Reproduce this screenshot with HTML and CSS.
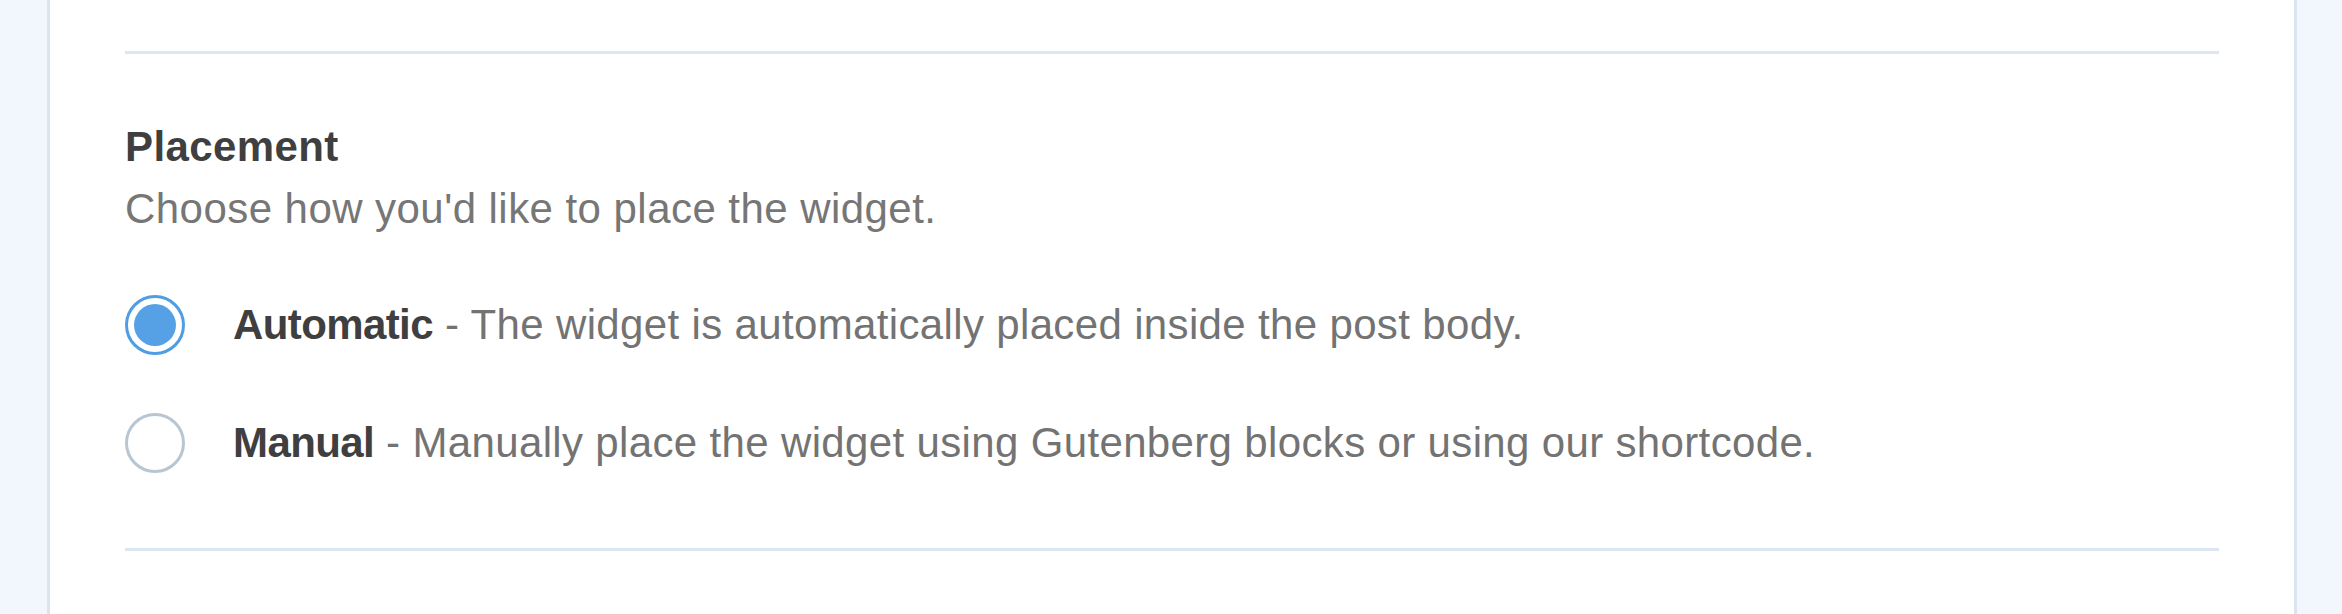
FILE: index.html
```html
<!DOCTYPE html>
<html lang="en">
<head>
<meta charset="utf-8">
<title>Placement</title>
<link rel="stylesheet" href="styles.css">
</head>
<body>
<div class="card">
  <div class="divider"></div>
  <section class="section">
    <h2 class="title">Placement</h2>
    <p class="desc">Choose how you'd like to place the widget.</p>
    <div class="options">
      <label class="option">
        <span class="radio checked"><span class="dot"></span></span>
        <span class="label"><strong>Automatic</strong> - The widget is automatically placed inside the post body.</span>
      </label>
      <label class="option">
        <span class="radio"></span>
        <span class="label"><strong>Manual</strong> - Manually place the widget using Gutenberg blocks or using our shortcode.</span>
      </label>
    </div>
  </section>
  <div class="divider"></div>
</div>
</body>
</html>
```
FILE: styles.css
```css
html, body {
  margin: 0;
  padding: 0;
}
body {
  background: #f2f7fe;
  height: 614px;
  overflow: hidden;
  font-family: "Liberation Sans", Arial, Helvetica, sans-serif;
}
.card {
  margin: 0 45px 0 47px;
  background: #ffffff;
  border-left: 3px solid #dbe5ef;
  border-right: 3px solid #dbe5ef;
  height: 614px;
  box-sizing: border-box;
  padding: 51px 75px 0 75px;
}
.divider {
  height: 3px;
  background: #dbe6f0;
}
.section {
  padding: 68px 0 75px 0;
}
.title {
  margin: 0;
  font-size: 42px;
  line-height: 50px;
  font-weight: 700;
  letter-spacing: 0.4px;
  color: #3f3f3f;
}
.desc {
  margin: 12px 0 0 0;
  font-size: 42px;
  line-height: 50px;
  letter-spacing: 0.45px;
  color: #767676;
}
.options {
  margin-top: 61px;
  display: flex;
  flex-direction: column;
  gap: 58px;
}
.option {
  display: flex;
  align-items: center;
  gap: 48px;
  height: 60px;
}
.radio {
  width: 60px;
  height: 60px;
  box-sizing: border-box;
  border-radius: 50%;
  border: 3px solid #b8c6d4;
  display: flex;
  align-items: center;
  justify-content: center;
  flex: none;
}
.radio.checked {
  border-color: #4f9de3;
}
.dot {
  width: 42px;
  height: 42px;
  border-radius: 50%;
  background: #56a1e5;
}
.label {
  font-size: 42px;
  line-height: 50px;
  letter-spacing: 0.35px;
  color: #737373;
  white-space: nowrap;
}
.label strong {
  color: #3f3f3f;
  font-weight: 700;
  letter-spacing: -0.6px;
}
```
